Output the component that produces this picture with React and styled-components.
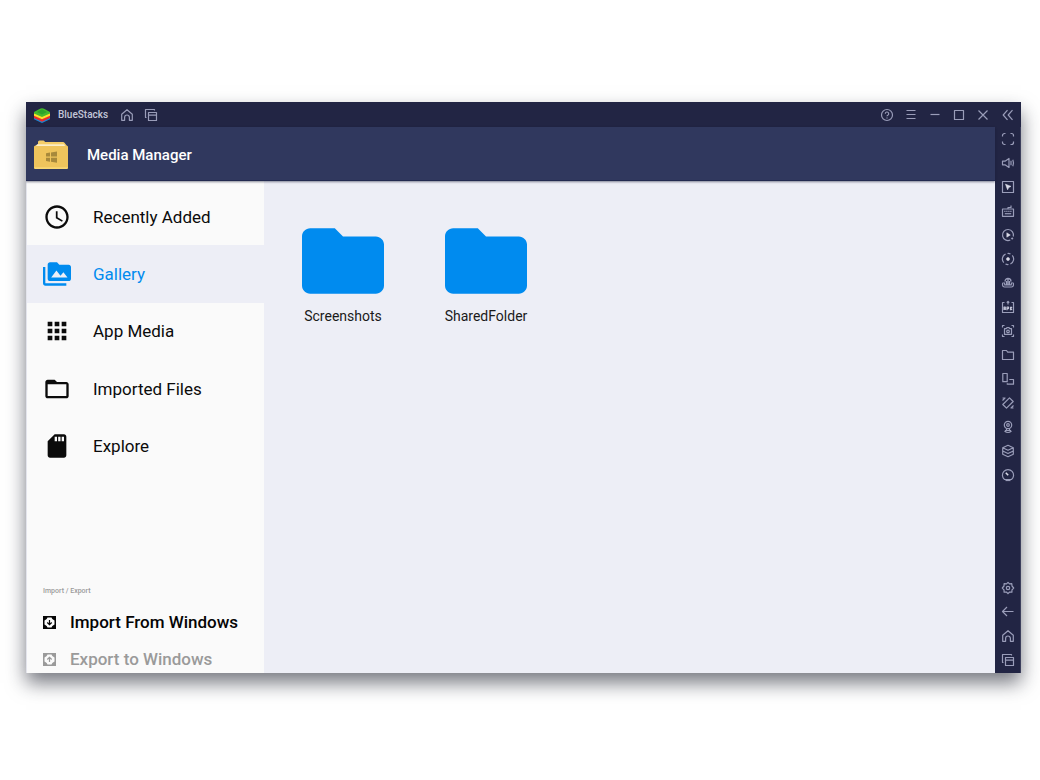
import React from "react";
import styled, { createGlobalStyle } from "styled-components";

const GlobalStyle = createGlobalStyle`
  *, *::before, *::after { box-sizing: border-box; }
  body { margin: 0; background: #fff; font-family: Roboto, "Liberation Sans", sans-serif; }
  button { font: inherit; color: inherit; background: none; border: 0; padding: 0; margin: 0; cursor: pointer; }
  svg { display: block; flex: none; }
`;

const Page = styled.div`
  min-height: 100vh;
  padding: 102px 19px 107px 26px;
  display: flex;
`;

const Window = styled.div`
  flex: 1;
  display: flex;
  flex-direction: column;
  overflow: hidden;
  background: #edeef6;
  box-shadow: 0 10px 18px rgba(30, 34, 46, 0.6);
`;

const TitleBar = styled.div`
  height: 25px;
  display: flex;
  align-items: center;
  justify-content: space-between;
  padding-top: 1px;
  background: #222544;
  color: #9a9db9;
`;

const Group = styled.div`
  display: flex;
  align-items: center;
`;

const Brand = styled.span`
  display: flex;
  align-items: center;
  gap: 8px;
  padding: 0 7px 0 8px;
  font-size: 10px;
  font-weight: 500;
  line-height: 12px;
  color: #c3c5d8;
`;

const IconButton = styled.button`
  width: ${(p) => p.$width || 24}px;
  height: 24px;
  display: grid;
  place-items: center;
`;

const Body = styled.div`
  flex: 1;
  display: flex;
`;

const Main = styled.div`
  flex: 1;
  display: flex;
  flex-direction: column;
`;

const Header = styled.header`
  height: 54px;
  display: flex;
  align-items: center;
  gap: 19px;
  padding: 2px 0 0 8px;
  background: #30385e;
  border-bottom: 1px solid #232a50;
  box-shadow: 0 1px 2px rgba(20, 24, 50, 0.5);
  z-index: 1;
`;

const Title = styled.h1`
  margin: 0;
  font-size: 15px;
  font-weight: 500;
  line-height: 20px;
  color: #fff;
`;

const Panels = styled.div`
  flex: 1;
  display: flex;
`;

const Sidebar = styled.aside`
  width: 238px;
  display: flex;
  flex-direction: column;
  justify-content: space-between;
  padding-top: 7px;
  background: #fafafa;
  border-left: 1px solid #e3e4ec;
`;

const Nav = styled.nav`
  height: 287px;
  display: grid;
  grid-auto-rows: 1fr;
`;

const NavItem = styled.button`
  display: flex;
  align-items: center;
  gap: 22px;
  padding-left: 16px;
  font-size: 17px;
  line-height: 20px;
  color: ${(p) => (p.$active ? "#008bef" : "#0b0b0b")};
  background: ${(p) => (p.$active ? "#edeef6" : "transparent")};
`;

const Transfer = styled.section`
  display: flex;
  flex-direction: column;
  gap: 9px;
  padding-left: 16px;
`;

const Caption = styled.h2`
  margin: 0 0 3px;
  font-size: 7px;
  font-weight: 500;
  line-height: 10px;
  color: #9b9b9b;
`;

const TransferButton = styled.button`
  height: 28px;
  display: flex;
  align-items: center;
  gap: 14px;
  font-size: 17px;
  font-weight: 500;
  line-height: 20px;
  color: ${(p) => (p.disabled ? "#9a9a9a" : "#050505")};
`;

const Files = styled.main`
  flex: 1;
  display: flex;
  flex-wrap: wrap;
  align-content: flex-start;
  gap: 61px;
  padding: 47px 38px;
`;

const FolderButton = styled.button`
  width: 82px;
  display: flex;
  flex-direction: column;
  align-items: center;
  gap: 12px;
  font-size: 14px;
  line-height: 20px;
  color: #1a1a1a;
`;

const Toolbar = styled.aside`
  width: 26px;
  display: flex;
  flex-direction: column;
  justify-content: space-between;
  padding-bottom: 1px;
  background: #222544;
  box-shadow: inset -1px 0 #3c3f5d;
  color: #9a9db9;
`;

const ToolGroup = styled.div`
  display: flex;
  flex-direction: column;
  align-items: center;
`;

const glyphs = {
  home: <path d="M1.700 6.200 7 1.700l5.300 4.500v6.100H9.400V9.400a2.400 2.400 0 0 0-4.800 0v2.900H1.700z" />,
  recents: <><path d="M4.500 4.500h8v8h-8zM4.500 7.200h8" /><path d="M2.500 9.500h-1v-8h9v1" /></>,
  help: <><circle cx="7" cy="7" r="5.500" /><path d="M5.300 5.700a1.700 1.700 0 1 1 2.500 1.500c-.6.3-.8.5-.8 1.100M7 9.500v1" /></>,
  menu: <path d="M2.500 2.500h9M2.500 6.500h9M2.500 10.500h9" />,
  minimize: <path d="M2.500 6.500h9" />,
  maximize: <path d="M2.500 2.500h9v9h-9z" />,
  close: <path d="m2.500 2.500 9 9m0-9-9 9" />,
  collapse: <path d="M6.500 2.200 2.200 7l4.300 4.800M11.500 2.200 7.200 7l4.300 4.800" />,
  fullscreen: <path d="M1.500 4.500v-1a2 2 0 0 1 2-2h1M9.500 1.500h1a2 2 0 0 1 2 2v1M12.500 9.500v1a2 2 0 0 1-2 2h-1M4.500 12.500h-1a2 2 0 0 1-2-2v-1" />,
  volume: <><path d="M1.500 5.200h2.500L8 2.500v9L4 8.800H1.500z" /><path d="M10 4.800v4.400M11.800 3.800q1.400 3.200 0 6.400" /></>,
  pointer: <><path d="M1.500 1.500h11v11h-11z" /><path d="m4.500 4.200 5.500 2.200-2.300 1-1.100 2.400z" fill="#dadbe8" stroke="#dadbe8" strokeWidth=".6" /></>,
  keyboard: <><path d="M1.500 5h11v7.300h-11zM7 5V3.500h3V1.500" /><path d="M3.300 7.300h7.500" strokeDasharray="1.200 .8" /><path d="M3.800 9.700h6.400" /></>,
  macro: <><path d="M9.300 12A5.500 5.500 0 1 1 12.300 8.500" /><path d="m5.800 4.800 3.500 2.200-3.500 2.200z" fill="#dadbe8" stroke="#dadbe8" strokeWidth=".5" /><path d="m11.800 9.800-1.300 1.400" strokeWidth="1.800" /></>,
  rotate: <><path d="M2.800 10.700a5.500 5.500 0 0 1 1.800-8.700M11.200 3.300a5.500 5.500 0 0 1-1.800 8.700" /><path d="M6.500 1.500a5.500 5.500 0 0 1 3 .5M7.500 12.500a5.500 5.500 0 0 1-3-.5" /><circle cx="7" cy="7" r="1.500" fill="#dadbe8" stroke="#dadbe8" strokeWidth=".6" /></>,
  cloud: <><path d="M4 5.500C4 1.500 10 1.500 10 5.500M5.500 5v4M7 3v6M8.500 5v4" strokeWidth="1.300" /><path d="M2.500 6.500C.8 7.500 1.200 11 3.500 11h7c2.300 0 2.700-3.500 1-4.500M3.300 8.800h7.400M3.500 6.500v2M10.500 6.500v2" /></>,
  apk: <><path d="M3.500 2.500h-2v10h11v-10h-2M7 1v3.500M5.700 2.700 7 1.300l1.300 1.400" /><path d="M3 10V7h1.300v3M3 8.700h1.300M6 10.200V7h1.500v1.600H6M9.500 6.700v3.500M11 6.900 9.800 8.500 11 10" stroke="#c3c5d8" /></>,
  screenshot: <><path d="M1.500 3.500v-2h2M10.500 1.500h2v2M12.500 10.500v2h-2M3.500 12.500h-2v-2" /><path d="M3.500 4.700h1.700l.6-1h2.400l.6 1h1.700v5.600h-7z" /><circle cx="7" cy="7.400" r="1.300" /></>,
  folder: <path d="M1.500 2.500h4l1.200 1.700h5.800v7.300h-11z" />,
  layout: <><path d="M1.800 1.500h4.400v8.200H1.800z" /><path d="M8.300 7.500h4.200v4.700H6.300v-1" /></>,
  shake: <><path d="m1.800 8.500 6.700-6.700 3.700 3.700-6.700 6.700z" /><path d="M1.500 2h3M1.500 4.500 4 2M12.500 9.500 10 12M12.500 12h-3" /></>,
  location: <><circle cx="7" cy="5" r="3.700" /><circle cx="7" cy="5" r="1.300" /><path d="M5.500 8.500v2M8.500 8.500v2M3.500 11q3.500 3 7 0M4 10.500h6" /></>,
  layers: <path d="M7 1.300 12.300 3.800 7 6.300 1.700 3.800zM1.700 3.800v6.400L7 12.700l5.300-2.500V3.800M1.700 7 7 9.500 12.300 7" />,
  gauge: <><path d="M3.500 11.500a5.600 5.600 0 1 1 7 0z" /><path d="m4.800 4.800 2.400 2.400" stroke="#dadbe8" strokeWidth="1.600" /><path d="M4.500 12.500h5" /></>,
  settings: <><path d="m7 1.300 1.500 1.500 2.300-.1.200 2.300L12.700 7 11 8.800l-.1 2.300-2.300-.1L7 12.700l-1.600-1.700-2.300.1L3 8.800 1.300 7 3 5l.1-2.300 2.400.1z" /><circle cx="7" cy="7" r="1.700" /></>,
  back: <path d="M12.500 6.500h-11M6 2 1.500 6.500 6 11" />,
};

const Glyph = ({ name }) => (
  <svg width="14" height="14" viewBox="0 0 14 14" fill="none" stroke="currentColor" strokeWidth="1.2" strokeLinejoin="round" aria-hidden="true">
    {glyphs[name]}
  </svg>
);

const Logo = () => (
  <svg width="16" height="15" viewBox="0 0 16 15" aria-hidden="true">
    <path d="M0 9.500 8 13l8-3.500v1.700L8 15l-8-3.800z" fill="#1689d8" />
    <path d="M0 7 8 11l8-4v3l-8 3.700L0 10z" fill="#e92c2e" />
    <path d="M0 4.500 8 8l8-3.500V7.700l-8 3.600L0 7.700z" fill="#ffe12a" />
    <path d="M0 4 5.500 1Q8-.3 10.500 1L16 4v1.500L8 9 0 5.500z" fill="#45b82d" />
    <path d="m3 4 5-2.700L13 4 8 6.500z" fill="#2da32b" />
  </svg>
);

const MediaIcon = () => (
  <svg width="34" height="30" viewBox="0 0 34 30" aria-hidden="true">
    <path d="M4 4V2Q4 .5 5.500.5h4q1 0 1.500 1.500h18q1 0 1.700 1L33 6v4H1V6z" fill="#f4cd69" />
    <path d="M3 4.500h27l2 2.500H1.500z" fill="#fffbed" />
    <path d="M0 7q0-1.200 1.200-1.200h31.600Q34 5.800 34 7v20.500q0 1.500-1.500 1.500h-31Q0 29 0 27.500z" fill="#efc45c" />
    <path d="M0 27.200q0 1.800 1.500 1.800h31q1.500 0 1.500-1.800z" fill="#f8d774" />
    <path d="m12 13.200 4-.6v4h-4zm5-.8 6-.8v5h-6zm-5 5.300h4v4l-4-.6zm5 0h6v5l-6-.9z" fill="#a8893b" />
  </svg>
);

const navItems = [
  { label: "Recently Added", path: "M11.990 2C6.470 2 2 6.480 2 12s4.470 10 9.990 10C17.520 22 22 17.520 22 12S17.520 2 11.990 2zM12 20c-4.420 0-8-3.580-8-8s3.580-8 8-8 8 3.580 8 8-3.580 8-8 8zm.5-13H11v6l5.250 3.150.75-1.230-4.500-2.670z" },
  { label: "Gallery", active: true, path: "M2 6H0v14c0 1.100.9 2 2 2h18v-2H2V6zm20-2h-8l-2-2H6c-1.100 0-2 .9-2 2v12c0 1.100.9 2 2 2h16c1.100 0 2-.9 2-2V6c0-1.100-.9-2-2-2zM7 15l4.500-6 3.500 4.510 2.500-3.010L21 15H7z" },
  { label: "App Media", path: "M4 8h4V4H4v4zm6 12h4v-4h-4v4zm-6 0h4v-4H4v4zm0-6h4v-4H4v4zm6 0h4v-4h-4v4zm6-10v4h4V4h-4zm-6 4h4V4h-4v4zm6 6h4v-4h-4v4zm0 6h4v-4h-4v4z" },
  { label: "Imported Files", path: "M20 6h-8l-2-2H4c-1.100 0-2 .9-2 2v12c0 1.100.9 2 2 2h16c1.100 0 2-.9 2-2V8c0-1.100-.9-2-2-2zm0 12H4V8h16v10z" },
  { label: "Explore", path: "M18 2h-8L4 8v12c0 1.100.9 2 2 2h12c1.100 0 2-.9 2-2V4c0-1.100-.9-2-2-2zm-6 6h-2V4h2v4zm3 0h-2V4h2v4zm3 0h-2V4h2v4z" },
];

const TransferIcon = ({ up }) => (
  <svg width="13" height="13" viewBox="0 0 13 13" aria-hidden="true">
    <path d="M0 0h13v13H0z" fill="currentColor" />
    <path d="M4.500 1.500h4l.8 1.500 2.200 1.500v4l-2.200 1.500-.8 1.500h-4L3.700 10 1.500 8.500v-4L3.700 3z" fill="#fafafa" />
    <path d={up ? "M6.500 9V4.500M4.300 6.500l2.200-2.200 2.200 2.200" : "M6.500 4v4.500M4.300 6.500l2.200 2.200 2.200-2.200"} fill="none" stroke="currentColor" strokeWidth="1.200" />
  </svg>
);

const windowControls = [
  ["help", "Help"],
  ["menu", "Menu"],
  ["minimize", "Minimize"],
  ["maximize", "Maximize"],
  ["close", "Close"],
];

const tools = [
  ["fullscreen", "Full screen"],
  ["volume", "Volume"],
  ["pointer", "Lock cursor"],
  ["keyboard", "Game controls"],
  ["macro", "Macro recorder"],
  ["rotate", "Sync"],
  ["cloud", "Multi-instance"],
  ["apk", "Install APK"],
  ["screenshot", "Take screenshot"],
  ["folder", "Media folder"],
  ["layout", "Rotate"],
  ["shake", "Shake"],
  ["location", "Set location"],
  ["layers", "Eco mode"],
  ["gauge", "Performance"],
];

const systemTools = [
  ["settings", "Settings"],
  ["back", "Back"],
  ["home", "Home"],
  ["recents", "Recent apps"],
];

const ToolButtons = ({ items }) =>
  items.map(([name, label]) => (
    <IconButton key={name} aria-label={label}>
      <Glyph name={name} />
    </IconButton>
  ));

export default function App() {
  return (
    <>
      <GlobalStyle />
      <Page>
        <Window>
          <TitleBar>
            <Group>
              <Brand><Logo />BlueStacks</Brand>
              <ToolButtons items={[["home", "Home"], ["recents", "Recent apps"]]} />
            </Group>
            <Group>
              <ToolButtons items={windowControls} />
              <IconButton $width={26} aria-label="Collapse toolbar"><Glyph name="collapse" /></IconButton>
            </Group>
          </TitleBar>
          <Body>
            <Main>
              <Header>
                <MediaIcon />
                <Title>Media Manager</Title>
              </Header>
              <Panels>
                <Sidebar>
                  <Nav>
                    {navItems.map((item) => (
                      <NavItem key={item.label} $active={item.active}>
                        <svg width="28" height="28" viewBox="0 0 24 24" fill="currentColor" aria-hidden="true">
                          <path d={item.path} />
                        </svg>
                        {item.label}
                      </NavItem>
                    ))}
                  </Nav>
                  <Transfer>
                    <Caption>Import / Export</Caption>
                    <TransferButton><TransferIcon />Import From Windows</TransferButton>
                    <TransferButton disabled><TransferIcon up />Export to Windows</TransferButton>
                  </Transfer>
                </Sidebar>
                <Files>
                  {["Screenshots", "SharedFolder"].map((name) => (
                    <FolderButton key={name}>
                      <svg width="82" height="66" viewBox="2 4 20 16" fill="#008bef" aria-hidden="true">
                        <path d="M10 4H4c-1.100 0-2 .9-2 2v12c0 1.100.9 2 2 2h16c1.100 0 2-.9 2-2V8c0-1.100-.9-2-2-2h-8l-2-2z" />
                      </svg>
                      {name}
                    </FolderButton>
                  ))}
                </Files>
              </Panels>
            </Main>
            <Toolbar>
              <ToolGroup><ToolButtons items={tools} /></ToolGroup>
              <ToolGroup><ToolButtons items={systemTools} /></ToolGroup>
            </Toolbar>
          </Body>
        </Window>
      </Page>
    </>
  );
}
